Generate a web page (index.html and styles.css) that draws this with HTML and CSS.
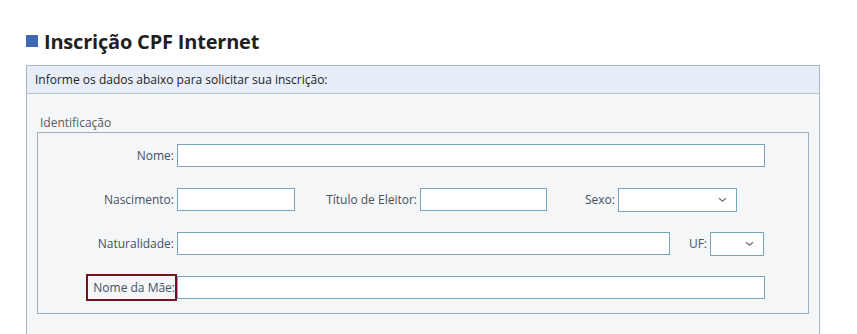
FILE: index.html
```html
<!DOCTYPE html>
<html lang="pt-BR">

<head>
    <meta charset="UTF-8">
    <meta name="viewport" content="width=device-width, initial-scale=1.0">
    <title>Inscrição CPF Internet</title>
    <link rel="stylesheet" href="styles.css">
</head>

<body>
    <h1 class="page-title"><span class="bullet"></span>Inscrição CPF Internet</h1>

    <div class="panel">
        <div class="panel-header">Informe os dados abaixo para solicitar sua inscrição:</div>

        <div class="panel-body">
            <div class="legend">Identificação</div>
            <div class="fieldset">
                <!-- Nome -->
                <div class="row">
                    <label class="lbl lbl-main">Nome:</label>
                    <input class="field w-full" type="text">
                </div>

                <!-- Nascimento / Titulo / Sexo -->
                <div class="row">
                    <label class="lbl lbl-main">Nascimento:</label>
                    <input class="field w-nasc" type="text">
                    <label class="lbl lbl-titulo">Título de Eleitor:</label>
                    <input class="field w-titulo" type="text">
                    <label class="lbl lbl-sexo">Sexo:</label>
                    <div class="select w-sexo">
                        <svg width="9" height="6" viewBox="0 0 9 6"><path d="M1 1.2l3.5 3L8 1.2" fill="none" stroke="#6b7280" stroke-width="1.3"/></svg>
                    </div>
                </div>

                <!-- Naturalidade / UF -->
                <div class="row">
                    <label class="lbl lbl-main">Naturalidade:</label>
                    <input class="field w-nat" type="text">
                    <label class="lbl lbl-uf">UF:</label>
                    <div class="select w-uf">
                        <svg width="9" height="6" viewBox="0 0 9 6"><path d="M1 1.2l3.5 3L8 1.2" fill="none" stroke="#6b7280" stroke-width="1.3"/></svg>
                    </div>
                </div>

                <!-- Nome da mae -->
                <div class="row">
                    <label class="lbl lbl-main"><span class="highlight">Nome da Mãe:</span></label>
                    <input class="field w-full" type="text">
                </div>
            </div>
        </div>
    </div>
</body>

</html>
```

FILE: styles.css
```css
body {
    font-family: "Open Sans", Arial, sans-serif;
    background: #fff;
    margin: 0;
    padding: 0;
    color: #222;
}

.page-title {
    display: flex;
    align-items: center;
    margin: 27px 0 0 26px;
    height: 28px;
    font-size: 20px;
    font-weight: 700;
    color: #1f1f1f;
    letter-spacing: -0.2px;
}

.bullet {
    display: inline-block;
    width: 12px;
    height: 12px;
    background: #3f69b2;
    margin-right: 6px;
}

.panel {
    margin: 10px 0 0 26px;
    width: 792px;
    border: 1px solid #a9b7c7;
    background: #f5f6f7;
    padding-bottom: 40px;
}

.panel-header {
    height: 27px;
    line-height: 27px;
    padding-left: 8px;
    background: #e7eef7;
    border-bottom: 1px solid #b6c3d2;
    font-size: 12px;
    color: #222;
}

.panel-body {
    padding: 20px 10px 0 10px;
}

.legend {
    font-size: 12px;
    color: #525c6c;
    padding-left: 3px;
    height: 18px;
    line-height: 18px;
}

.fieldset {
    width: 770px;
    border: 1px solid #9fb0c2;
    padding: 11px 0 14px 0;
    display: flex;
    flex-direction: column;
    gap: 21px;
}

.row {
    display: flex;
    align-items: center;
    height: 23px;
}

.lbl {
    font-size: 12px;
    color: #465163;
    text-align: right;
    padding-right: 3px;
    box-sizing: border-box;
}

.lbl-main {
    width: 139px;
}

.lbl-titulo {
    width: 125px;
}

.lbl-sexo {
    width: 71px;
}

.lbl-uf {
    width: 40px;
}

.highlight {
    display: inline-block;
    border: 2px solid #74131a;
    padding: 3px 0 3px 5px;
    margin-right: -3px;
    line-height: 17px;
}

.field {
    height: 23px;
    box-sizing: border-box;
    border: 1px solid #7aa3bd;
    background: #fff;
    margin: 0;
    padding: 0 4px;
    font-family: inherit;
}

.select {
    height: 24px;
    box-sizing: border-box;
    border: 1px solid #7aa3bd;
    background: #fff;
    display: flex;
    align-items: center;
    justify-content: flex-end;
    padding-right: 9px;
}

.w-full {
    width: 588px;
}

.w-nasc {
    width: 118px;
}

.w-titulo {
    width: 127px;
}

.w-sexo {
    width: 119px;
}

.w-nat {
    width: 493px;
}

.w-uf {
    width: 54px;
}
```
